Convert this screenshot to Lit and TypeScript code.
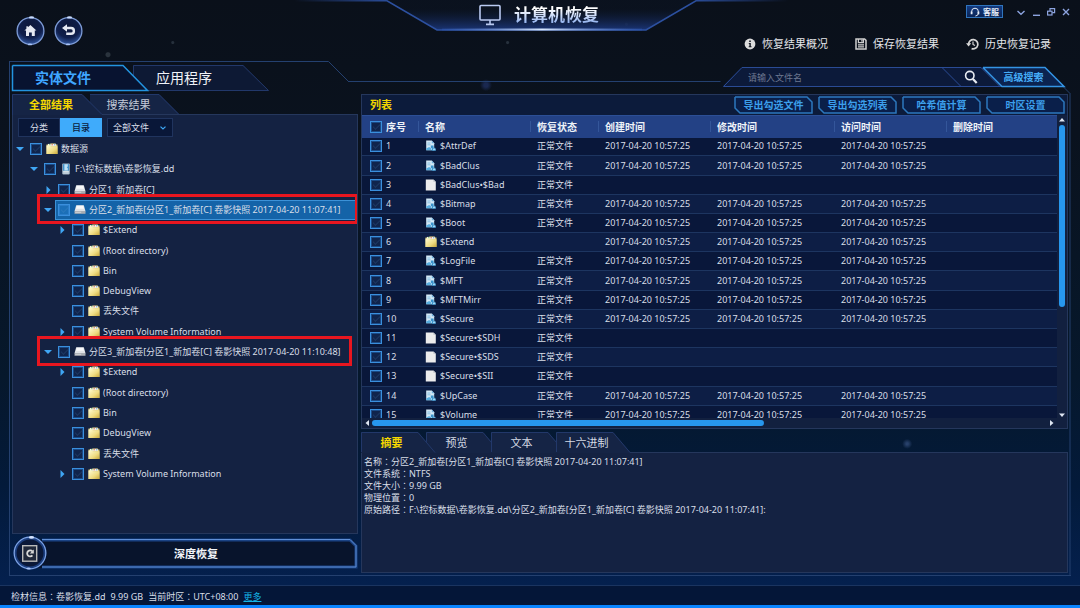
import { LitElement, html, css, svg, nothing } from "lit";
import { customElement, state } from "lit/decorators.js";

type NodeIcon = "folder" | "image" | "disk";
interface TreeRow {
  level: number;
  arrow: "open" | "closed" | "";
  icon: NodeIcon;
  label: string;
  selected?: boolean;
  marked?: boolean;
}
interface FileRow {
  name: string;
  kind: "doc" | "blank" | "folder";
  status: string;
  time: string;
}

const OK = "正常文件";
const TIME = "2017-04-20 10:57:25";

const children = (): TreeRow[] => [
  { level: 3, arrow: "closed", icon: "folder", label: "$Extend" },
  { level: 3, arrow: "", icon: "folder", label: "(Root directory)" },
  { level: 3, arrow: "", icon: "folder", label: "Bin" },
  { level: 3, arrow: "", icon: "folder", label: "DebugView" },
  { level: 3, arrow: "", icon: "folder", label: "丢失文件" },
  { level: 3, arrow: "closed", icon: "folder", label: "System Volume Information" },
];

const TREE: TreeRow[] = [
  { level: 0, arrow: "open", icon: "folder", label: "数据源" },
  { level: 1, arrow: "open", icon: "image", label: "F:\\控标数据\\卷影恢复.dd" },
  { level: 2, arrow: "closed", icon: "disk", label: "分区1_新加卷[C]" },
  { level: 2, arrow: "open", icon: "disk", label: "分区2_新加卷[分区1_新加卷[C] 卷影快照 2017-04-20 11:07:41]", selected: true, marked: true },
  ...children(),
  { level: 2, arrow: "open", icon: "disk", label: "分区3_新加卷[分区1_新加卷[C] 卷影快照 2017-04-20 11:10:48]", marked: true },
  ...children(),
];

const FILES: FileRow[] = [
  { name: "$AttrDef", kind: "doc", status: OK, time: TIME },
  { name: "$BadClus", kind: "doc", status: OK, time: TIME },
  { name: "$BadClus•$Bad", kind: "blank", status: OK, time: "" },
  { name: "$Bitmap", kind: "doc", status: OK, time: TIME },
  { name: "$Boot", kind: "doc", status: OK, time: TIME },
  { name: "$Extend", kind: "folder", status: "", time: TIME },
  { name: "$LogFile", kind: "doc", status: OK, time: TIME },
  { name: "$MFT", kind: "doc", status: OK, time: TIME },
  { name: "$MFTMirr", kind: "doc", status: OK, time: TIME },
  { name: "$Secure", kind: "doc", status: OK, time: TIME },
  { name: "$Secure•$SDH", kind: "blank", status: OK, time: "" },
  { name: "$Secure•$SDS", kind: "blank", status: OK, time: "" },
  { name: "$Secure•$SII", kind: "blank", status: OK, time: "" },
  { name: "$UpCase", kind: "doc", status: OK, time: TIME },
  { name: "$Volume", kind: "doc", status: OK, time: TIME },
];

const DETAILS: [string, string][] = [
  ["名称", "分区2_新加卷[分区1_新加卷[C] 卷影快照 2017-04-20 11:07:41]"],
  ["文件系统", "NTFS"],
  ["文件大小", "9.99 GB"],
  ["物理位置", "0"],
  ["原始路径", "F:\\控标数据\\卷影恢复.dd\\分区2_新加卷[分区1_新加卷[C] 卷影快照 2017-04-20 11:07:41]:"],
];

const colon = html`<span class="colon">：</span>`;

const folderIcon = html`<svg class="ico" viewBox="0 0 12 12" aria-hidden="true">
  <defs><linearGradient id="fg" x1="0" y1="0" x2="1" y2="1"><stop offset="0" stop-color="#fffbd2"/><stop offset=".6" stop-color="#efdc82"/><stop offset="1" stop-color="#c9a93c"/></linearGradient></defs>
  <path d="M.5 1.5h3.2l.8-.9h5l.8 1H11.5v9.4H.5z" fill="#d9c777"/>
  <path d="M2 .9h8v2H2z" fill="#f7f4ea"/><path d="M3 1.3h1.6v1H3z" fill="#7fbf6a"/><path d="M5.4 1.3H7v1H5.4z" fill="#d9785a"/><path d="M8 1.3h1.4v1H8z" fill="#6aa5d8"/>
  <path d="M.5 2.6H4l.8.7h6.7v7.6H.5z" fill="url(#fg)"/></svg>`;
const imageIcon = html`<svg class="ico" viewBox="0 0 12 12" aria-hidden="true">
  <rect x="2.2" y=".6" width="7.6" height="10.8" rx=".8" fill="#9fb4c6"/><rect x="3" y="1.2" width="6" height="6.4" fill="#3f93cf"/>
  <path d="M4.4 1.2h3.4v2.2l-1 .8 1 1v2.4H4.4z" fill="#bfe2f6"/><path d="M3.2 8.6h5.6M3.2 10h5.6" stroke="#e9f0f5" stroke-width=".8"/></svg>`;
const diskIcon = html`<svg class="ico" viewBox="0 0 12 12" aria-hidden="true">
  <path d="M2.2 1.2h7.6l1.7 6H.5z" fill="#dfe2e6"/><path d="M2.8 1.7h6.4l.8 3H2z" fill="#f8f9fa"/>
  <path d="M.5 7h11v2.800H.5z" fill="#a9adb3"/><path d="M1.200 8.300h6" stroke="#e9ebee" stroke-width=".6"/></svg>`;
const docIcon = html`<svg class="ico" viewBox="0 0 12 12" aria-hidden="true">
  <path d="M1.200.5h5.600l2.400 2.700v7H1.200z" fill="#d3e8f6"/><path d="M6.800.5v2.700h2.400z" fill="#6fb0dd"/>
  <path d="M2.400 3h3M2.400 4.800h3.200" stroke="#7fbbe2" stroke-width=".9"/>
  <path d="M1.200 8.600l3-1.600 2 1.600v1.600h-5z" fill="#58aee0"/>
  <path d="M5.800 5.400h2.800v2.400h1.600l.8 3H6.400l.8-2.600H5.800z" fill="#3b93cc"/><path d="M8 8.600h2.400v1.600H8z" fill="#9fd8f6"/></svg>`;
const blankIcon = html`<svg class="ico" viewBox="0 0 12 12" aria-hidden="true">
  <path d="M.8.4h7.600l2.400 2.400v8.800H.8z" fill="#ececec"/><path d="M8.400.4v2.400h2.400z" fill="#bfc3c8"/></svg>`;

const ICONS = { folder: folderIcon, image: imageIcon, disk: diskIcon, doc: docIcon, blank: blankIcon };

const shape = (w: number, h: number, points: string, line: string) => html`<svg class="shape" width=${w} height=${h} viewBox="0 0 ${w} ${h}" aria-hidden="true">
  <polygon class="fill" points=${points} /><polyline class="edge" points=${line} />
</svg>`;

@customElement("app-root")
export class AppRoot extends LitElement {
  @state() private tab = 0;

  static styles = css`
    :host {
      display: block;
      font: 9px/12px "Noto Sans", "Noto Sans CJK SC", sans-serif;
      color: #d9dfe8;
    }
    * { box-sizing: border-box; }
    button, input, select {
      font: inherit; color: inherit; background: none; border: 0; padding: 0; margin: 0;
    }
    button { cursor: pointer; }
    svg { display: block; }
    .colon { font-family: "Noto Sans CJK TC", sans-serif; }
    .app {
      height: 100vh;
      min-height: 560px;
      display: flex;
      flex-direction: column;
      background:
        radial-gradient(circle at 16% 7%, #26303c 0 1px, transparent 2px),
        radial-gradient(circle at 10% 9%, #2a333d 0 2px, transparent 3px),
        radial-gradient(circle at 47% 7%, #27313d 0 1px, transparent 2px),
        radial-gradient(circle at 45% 14%, #1a2850 0 2px, transparent 6px),
        radial-gradient(circle at 58% 4%, #222c38 0 1px, transparent 2px),
        radial-gradient(circle at 84% 73%, #27406a 0 1px, transparent 5px),
        radial-gradient(circle at 93% 98%, #24405e 0 2px, transparent 3px),
        linear-gradient(180deg, #0a101a 0%, #0a121e 22%, #06182c 62%, #031a3a 80%, #04204e 96%);
    }

    .head { position: relative; flex: none; height: 61px; display: flex; justify-content: space-between; padding: 0 16px 0 15px; }
    .banner { position: absolute; left: 50%; top: 0; transform: translateX(-50%); width: 512px; height: 36px; }
    .banner svg.plate { position: absolute; inset: 0; }
    .title { position: relative; display: flex; align-items: center; justify-content: center; gap: 13px; height: 30px; margin: 0; padding-right: 2px; }
    .title span {
      font-size: 17px; line-height: 24px; font-weight: 700;
      background: linear-gradient(#fff 25%, #8fb0ee 85%); -webkit-background-clip: text; background-clip: text; color: transparent;
    }
    .round { display: flex; gap: 8px; padding-top: 15px; }
    .round button { width: 30px; height: 32px; }
    .tools { display: flex; flex-direction: column; align-items: flex-end; gap: 18px; padding-top: 5px; }
    .win { display: flex; align-items: center; gap: 5px; margin-right: -7px; }
    .win button { width: 10px; height: 12px; }
    .win .service {
      width: 37px; height: 13px; display: flex; align-items: center; justify-content: center; gap: 3px; margin-right: 8px;
      font-size: 8px; font-weight: 700; border: 1px solid #2f74bd; background: linear-gradient(#123a80, #0b2557); color: #e6edf8;
    }
    .actions { display: flex; gap: 27px; margin-right: 13px; }
    .actions button { display: flex; align-items: center; gap: 6px; font-size: 11px; line-height: 16px; color: #e4e6ea; }

    .frame { position: relative; flex: 1; display: flex; flex-direction: column; margin: 0 9px; padding: 4px 3px 3px; min-height: 0; }
    .outline { position: absolute; inset: 0; width: 100%; height: 100%; pointer-events: none; overflow: visible; }
    .outline * { stroke: #24406f; fill: none; overflow: visible; }

    .top { position: relative; flex: none; display: flex; justify-content: space-between; align-items: flex-start; height: 29px; }
    .tabs { display: flex; }
    .tabs button { position: relative; display: block; padding: 0; text-align: center; }
    .tabs button span { position: relative; }
    .shape { position: absolute; left: 0; top: 0; overflow: visible; }
    .shape .fill { fill: #152445; }
    .shape .edge { fill: none; stroke: #22386a; }

    .primary button { width: 136px; height: 26px; padding-right: 34px; font-size: 14px; color: #f0f3f8; }
    .primary button + button { margin-left: -15px; }
    .primary .shape .fill { fill: #0d1934; }
    .primary .on .shape .fill { fill: #081330; }
    .primary .on .shape .edge { stroke: #2394e0; stroke-width: 1.5; }
    .primary .on { font-weight: 700; color: #3fa6ff; z-index: 1; }

    .search { position: relative; display: flex; align-items: center; width: 342px; height: 20px; margin: 2px 3px 0 0; }
    .search > .shape .fill { fill: #0c1a3a; }
    .search > .shape .edge { stroke: #2a4b94; }
    .search input { position: relative; width: 196px; margin-left: 25px; height: 18px; outline: 0; }
    .search input::placeholder { color: #6c7890; opacity: 1; }
    .search .go { position: relative; margin-left: 20px; width: 14px; height: 18px; }
    .search .adv { position: absolute; right: 0; top: 0; width: 83px; height: 20px; font-size: 10px; font-weight: 700; color: #46acf8; }
    .search .adv span { position: relative; }
    .adv .shape .fill { fill: #0b2350; }
    .adv .shape .edge { stroke: #3494e4; stroke-width: 1.5; }

    .body { position: relative; flex: 1; display: grid; grid-template-columns: 346px minmax(0, 1fr); grid-template-rows: minmax(0, 1fr); gap: 3px; min-height: 0; }
    .side, .right { display: flex; flex-direction: column; min-height: 0; }
    .sub { position: relative; flex: none; height: 20px; z-index: 1; }
    .sub button { width: 90px; height: 21px; padding-right: 12px; font-size: 11px; line-height: 20px; color: #c4cbd8; }
    .sub button + button { margin-left: -12px; padding-right: 13px; }
    .sub .on { color: #f5d800; z-index: 1; font-weight: 700; }

    .panel { background: #142242; border: 1px solid #25375c; }
    .tree-panel { flex: 1; padding: 3px 1px 0 5px; min-height: 0; overflow: hidden; }
    .filters { display: flex; height: 19px; }
    .filters button { width: 42px; border: 1px solid #20345e; background: #091738; }
    .filters .on { background: #3fabfb; border-color: #3fabfb; color: #0a1c3e; font-weight: 500; }
    .pick { position: relative; width: 66px; margin-left: 5px; border: 1px solid #20345e; background: #091738; }
    .pick select { appearance: none; width: 100%; height: 100%; padding-left: 5px; outline: 0; }
    .pick svg { position: absolute; right: 6px; top: 7px; pointer-events: none; }
    .pick option { background: #091738; }

    .tree { list-style: none; margin: 2px 0 0; padding: 0; display: grid; grid-auto-rows: 1fr; height: 345px; }
    .tree li { position: relative; display: flex; align-items: center; }
    .tree .lv1 { padding-left: 14px; }
    .tree .lv2 { padding-left: 28px; }
    .tree .lv3 { padding-left: 42px; }
    .twist { width: 8px; height: 8px; margin: 0 3px 0 -2px; flex: none; }
    .item { display: flex; align-items: center; flex: 1; height: 100%; padding-left: 2px; border: 1px solid transparent; white-space: nowrap; }
    .item .ico { margin: 0 3px 0 4px; }
    .sel .item { background: #1463a8; border-color: #3c92d8; }
    .mark { position: absolute; left: 19px; top: -6px; right: -2px; bottom: -4px; border: 3px solid #e8161f; z-index: 1; pointer-events: none; }
    .mark.short { right: 4px; }
    .ico { width: 12px; height: 12px; flex: none; }

    .cb {
      appearance: none; width: 12px; height: 12px; flex: none; margin: 0; position: relative;
      border: 1px solid #3a8fdd; background: #10244c; box-shadow: inset 0 0 0 1px #1b4a86;
    }
    .cb::after {
      content: ""; position: absolute; left: 2px; top: 2px; width: 6px; height: 3px;
      border: solid #1d3862; border-width: 0 0 1px 1px; transform: rotate(-45deg);
    }
    .cb:checked::after { border-color: #7cc4ff; }
    .sel .cb { background: #1b6fb8; box-shadow: inset 0 0 0 1px #2a7cc8; }
    .sel .cb::after { border-color: #2a78bc; }

    .deep { position: relative; flex: none; height: 34px; margin: 3px 0 2px; display: block; width: 100%; padding: 0 0 0 22px; font-size: 11px; font-weight: 700; color: #f3f6fa; }
    .deep .bar { position: absolute; inset: 0; width: 100%; height: 100%; overflow: visible; }
    .deep .bar svg { overflow: visible; }
    .deep .badge { position: absolute; left: 1px; top: -1px; }
    .deep span { position: relative; }

    .list { flex: 1; display: flex; flex-direction: column; min-height: 0; background: #0c1b3b; }
    .bar-top { display: flex; flex: none; align-items: center; justify-content: space-between; height: 20px; padding: 0 2px 0 8px; }
    .caption { margin: 0; font-size: 11px; line-height: 20px; font-weight: 700; color: #f0d400; }
    .cmds { display: flex; gap: 5px; }
    .cmds button { position: relative; width: 79px; height: 18px; font-size: 10px; font-weight: 700; color: #3c9fec; }
    .cmds button span { position: relative; }
    .cmds .fill { fill: #0a1f4a; }
    .cmds .edge { stroke: #2c78be; stroke-width: 1.5; }
    .grid { flex: 1; display: grid; grid-template-columns: minmax(0, 1fr) 10px; grid-template-rows: minmax(0, 1fr) 10px; min-height: 0; background: #12203f; }
    .clip { overflow: hidden; }
    table { width: 100%; height: 310px; border-collapse: collapse; table-layout: fixed; }
    thead { height: 22px; }
    th, td { padding: 0 0 0 7px; text-align: left; white-space: nowrap; }
    th { height: 22px; background: #234185; border-top: 1px solid #2c4f96; font-size: 10px; font-weight: 700; color: #eef2f8; }
    th + th { background-image: linear-gradient(#34569a, #34569a); background-size: 1px 11px; background-repeat: no-repeat; background-position: 0 5px; }
    td { border-bottom: 1px solid #1d3560; background: #09173a; }
    tr:nth-child(even) td { background: #0d1e45; }
    .cell { display: flex; align-items: center; gap: 4px; }
    .cell .ico { margin-right: -1px; }
    .num { padding-left: 8px; }
    .c0 { width: 56px; } .c1 { width: 112px; } .c2 { width: 68px; } .c3 { width: 112px; } .c4 { width: 124px; } .c5 { width: 112px; }
    .vbar { display: flex; flex-direction: column; align-items: center; padding: 3px 0 1px; }
    .vtrack { flex: 1; width: 6px; margin: 3px 0; }
    .vthumb { height: 64%; border-radius: 3px; background: #2797ee; }
    .hbar { display: flex; align-items: center; padding: 0 3px; }
    .htrack { flex: 1; height: 6px; margin: 0 3px; }
    .hthumb { width: 58%; height: 100%; border-radius: 3px; background: #2797ee; }

    .lower { position: relative; flex: none; height: 20px; margin-top: 3px; z-index: 1; }
    .lower button { width: 74px; height: 21px; padding-right: 13px; font-size: 11px; line-height: 20px; color: #d3d9e4; }
    .lower button + button { margin-left: -9px; }
    .lower .on { color: #f5d800; z-index: 1; font-weight: 700; }
    .info { flex: none; height: 121px; margin: 0; padding: 3px 2px; }
    .info div { display: flex; white-space: nowrap; }
    .info dt, .info dd { margin: 0; }

    .foot { flex: none; display: flex; align-items: center; gap: 5px; height: 32px; padding: 12px 11px 0; border-bottom: 3px solid #0a84ff;
      background: linear-gradient(#1a3460, #1a3460) 0 9px / 100% 1px no-repeat, linear-gradient(#041638, #041638) 0 9px / 100% 100% no-repeat; }
    .foot a { color: #14b4e6; }
  `;

  private check(label: string) {
    return html`<input class="cb" type="checkbox" aria-label=${label} />`;
  }

  private outline() {
    return html`<svg class="outline" aria-hidden="true">
      <path d="M.5 0V20M0 .5H319.5L339.5 20.5" />
      <line x1=".5" y1="20" x2=".5" y2="100%" />
      <line x1="339" y1="20.5" x2="67%" y2="20.5" />
      <svg x="100%" y="0"><path d="M-8 25.5L-1.5 32" /></svg>
      <svg x="100%" y="0" width="1" height="100%"><line x1="-1" y1="32" x2="-1" y2="100%" /></svg>
      <svg x="0" y="100%" width="100%" height="1"><line x1="0" y1="-.5" x2="100%" y2="-.5" /></svg>
    </svg>`;
  }

  private header() {
    const ring = (id: string, glyph: unknown) => html`<svg width="30" height="32" viewBox="0 0 30 32" aria-hidden="true">
      <defs><radialGradient id=${id} cx=".5" cy=".3" r=".75"><stop offset="0" stop-color="#0c1638"/><stop offset=".6" stop-color="#101f4c"/><stop offset="1" stop-color="#3862b0"/></radialGradient></defs>
      <circle cx="15.5" cy="16" r="13.4" fill="url(#${id})" stroke="#7d9bd6" stroke-width="1.3" />
      <ellipse cx="16.5" cy="2.4" rx="2.6" ry="1.2" fill="#c9dcff" /><ellipse cx="15" cy="29.4" rx="2.2" ry=".9" fill="#a9c4f6" />${glyph}</svg>`;
    return html`<header class="head">
      <div class="banner">
        <svg class="plate" width="512" height="36" viewBox="0 0 512 36" aria-hidden="true">
          <defs>
            <linearGradient id="pl" x1="0" y1="0" x2="0" y2="1"><stop offset=".3" stop-color="#0b1424" stop-opacity=".4"/><stop offset="1" stop-color="#1a3475"/></linearGradient>
            <linearGradient id="ln" x1="0" x2="1"><stop offset="0" stop-color="#2a4da0" stop-opacity="0"/><stop offset=".2" stop-color="#2c50a0"/><stop offset=".8" stop-color="#2c50a0"/><stop offset="1" stop-color="#2a4da0" stop-opacity="0"/></linearGradient>
            <linearGradient id="gl" x1="0" x2="1"><stop offset="0" stop-color="#2f5cc0" stop-opacity=".3"/><stop offset=".5" stop-color="#d8e8ff"/><stop offset="1" stop-color="#2f5cc0" stop-opacity=".3"/></linearGradient>
          </defs>
          <path d="M103 0L153 30H362L412 0z" fill="url(#pl)" />
          <path d="M10 .8H103L153 30H362L412 .8H504" fill="none" stroke="url(#ln)" stroke-width="1.6" />
          <rect x="158" y="28.5" width="200" height="2" fill="url(#gl)" />
        </svg>
        <h1 class="title">
          <svg width="22" height="22" viewBox="0 0 22 22" fill="none" stroke="#b9c9f0" stroke-width="1.6" aria-hidden="true"><rect x="1" y="1.5" width="20" height="14.5" rx="1" /><path d="M11 16v4M7 20.4h8" /></svg>
          <span>计算机恢复</span>
        </h1>
      </div>
      <nav class="round" aria-label="导航">
        <button aria-label="主页">${ring("r1", svg`<path d="M15.4 10l6 5.6h-1.6V21h-3v-3.6h-2.8V21h-3v-5.4H9.4l2-1.9v-2.5h1.5v1.1z" fill="#e6e9f2" />`)}</button>
        <button aria-label="返回">${ring("r2", svg`<path d="M14 9.200v2.600h4a4.100 4.100 0 0 1 0 8.200h-4.800v-2.400H18a1.700 1.700 0 0 0 0-3.400h-4v2.600L9 13z" fill="#e6e9f2" />`)}</button>
      </nav>
      <div class="tools">
        <div class="win">
          <button class="service"><svg width="10" height="10" viewBox="0 0 10 10" fill="none" stroke="#e6edf8" aria-hidden="true"><path d="M1.6 6V4.6a3.4 3.4 0 0 1 6.8 0V6M8.4 6.6Q8 8.8 5.4 9" /><path d="M1.6 4.4v2.8M8.4 4.4v2.8" stroke-width="1.8" /></svg>客服</button>
          <button aria-label="菜单"><svg width="10" height="12" viewBox="0 0 10 12" fill="none" stroke="#8da4e0" stroke-width="1.4"><path d="M1.5 5L5 8.2 8.5 5" /></svg></button>
          <button aria-label="最小化"><svg width="10" height="12" viewBox="0 0 10 12" stroke="#8da4e0" stroke-width="1.4"><path d="M2 9.3h7" /></svg></button>
          <button aria-label="还原"><svg width="10" height="12" viewBox="0 0 10 12" fill="none" stroke="#8da4e0" stroke-width="1.2"><path d="M4 5V2.6h4.6v4H6.2" /><rect x="1.6" y="5.2" width="4.4" height="3.8" /></svg></button>
          <button aria-label="关闭"><svg width="10" height="12" viewBox="0 0 10 12" stroke="#8da4e0" stroke-width="1.4"><path d="M2 3l6 6M8 3L2 9" /></svg></button>
        </div>
        <div class="actions">
          <button><svg width="12" height="12" viewBox="0 0 12 12" aria-hidden="true"><circle cx="6" cy="6" r="5.4" fill="#dcdcdc" /><path d="M4.8 4.9h2v3.4h.7v1H4.7v-1h.7V5.9h-.6zM5.2 2.4h1.6v1.5H5.2z" fill="#10151e" /></svg>恢复结果概况</button>
          <button><svg width="12" height="12" viewBox="0 0 12 12" fill="none" stroke="#cfcfcf" stroke-width="1.5" aria-hidden="true"><path d="M1 1h8.6L11 2.4V11H1z" /><path d="M3.4 1v3.6h5V1M6.9 1.8v2M3 6.8h6M3 8.8h6" stroke-width="1.2" /></svg>保存恢复结果</button>
          <button><svg width="13" height="12" viewBox="0 0 13 12" fill="none" stroke="#d6d6d6" stroke-width="1.7" aria-hidden="true"><path d="M2.6 6.4A4.6 4.6 0 1 1 5.6 10.6" /><path d="M0 5.2h5.2L2.6 8.400z" fill="#d6d6d6" stroke="none" /><path d="M7 3.4v3l2 1.2" stroke-width="1.2" /></svg>历史恢复记录</button>
        </div>
      </div>
    </header>`;
  }

  private side() {
    return html`<section class="side">
      <div class="tabs sub">
        <button class="on">${shape(90, 21, "0,0 70,0 90,20 90,21 0,21", "0.5,21 0.5,0.5 70,0.5 90,20.5")}<span>全部结果</span></button>
        <button>${shape(90, 21, "0,0 69,0 89,20 0,20", "0,0.5 69,0.5 89,20.5")}<span>搜索结果</span></button>
      </div>
      <div class="panel tree-panel">
        <div class="filters">
          <button>分类</button><button class="on">目录</button>
          <label class="pick"><select aria-label="文件类型"><option>全部文件</option></select>
            <svg width="6" height="4" viewBox="0 0 6 4" fill="none" stroke="#3fa6f4" stroke-width="1.2"><path d="M.5.6L3 3 5.5.6" /></svg></label>
        </div>
        <ul class="tree">
          ${TREE.map((r) => html`<li class="lv${r.level} ${r.selected ? "sel" : ""}">
            <svg class="twist" viewBox="0 0 8 8" fill="#3fa6f4" aria-hidden="true">
              ${r.arrow === "open" ? svg`<path d="M0 2h8L4 6z" />` : r.arrow === "closed" ? svg`<path d="M2.5 0v8L6.500 4z" />` : nothing}
            </svg>
            <label class="item">${this.check(r.label)}${ICONS[r.icon]}<span>${r.label}</span></label>
            ${r.marked ? html`<i class="mark ${r.selected ? "" : "short"}"></i>` : nothing}
          </li>`)}
        </ul>
      </div>
      <button class="deep">
        <svg class="bar" aria-hidden="true">
          <rect x="20" y="3" width="93%" height="28" fill="#08142c" />
          <svg x="100%"><path d="M-316 3H-8L-2 9V30H-316" fill="#08142c" stroke="#1b4384" stroke-width="3" /><path d="M-316 2.500H-8L-2 8.500V30H-316" fill="none" stroke="#5f8fd6" stroke-width="1" /></svg>
        </svg>
        <svg class="badge" width="34" height="34" viewBox="0 0 34 34" aria-hidden="true">
          <circle cx="17" cy="17" r="15" fill="#0a1838" stroke="#1c3f80" stroke-width="3" /><circle cx="17" cy="17" r="15.800" fill="none" stroke="#7fa4e4" stroke-width="1.2" />
          <ellipse cx="18.500" cy="1.400" rx="2.600" ry="1.300" fill="#d5e4ff" /><ellipse cx="15.500" cy="32.600" rx="2.200" ry="1" fill="#a9c4f6" />
          <rect x="9.700" y="9.700" width="14" height="15.500" fill="#20283a" stroke="#b9b9b9" stroke-width="1.4" />
          <path d="M19.400 19.400a3 3 0 1 1 0-4" fill="none" stroke="#d8d8d8" stroke-width="1.800" /><path d="M20.800 13.400v4h-4z" fill="#d8d8d8" />
        </svg>
        <span>深度恢复</span>
      </button>
    </section>`;
  }

  private list() {
    const cmd = (t: string) => html`<button>${shape(79, 18, "1,1 73,1 78,6 78,17 6,17 1,12", "1,1 73,1 78,6 78,17 6,17 1,12 1,1")}<span>${t}</span></button>`;
    return html`<div class="panel list">
      <div class="bar-top">
        <h2 class="caption">列表</h2>
        <div class="cmds">${["导出勾选文件", "导出勾选列表", "哈希值计算", "时区设置"].map(cmd)}</div>
      </div>
      <div class="grid">
        <div class="clip">
          <table>
            <thead><tr>
              <th class="c0 num"><div class="cell">${this.check("全选")}序号</div></th>
              <th class="c1">名称</th><th class="c2">恢复状态</th><th class="c3">创建时间</th>
              <th class="c4">修改时间</th><th class="c5">访问时间</th><th>删除时间</th>
            </tr></thead>
            <tbody>
              ${FILES.map((f, i) => html`<tr>
                <td class="num"><div class="cell">${this.check(f.name)}${i + 1}</div></td>
                <td><div class="cell">${ICONS[f.kind]}${f.name}</div></td>
                <td>${f.status}</td><td>${f.time}</td><td>${f.time}</td><td>${f.time}</td><td></td>
              </tr>`)}
            </tbody>
          </table>
        </div>
        <div class="vbar">
          <svg width="6" height="4" viewBox="0 0 6 4" fill="#dfe6f2"><path d="M3 0l3 3.500H0z" /></svg>
          <div class="vtrack"><div class="vthumb"></div></div>
          <svg width="6" height="4" viewBox="0 0 6 4" fill="#dfe6f2"><path d="M0 .5h6L3 4z" /></svg>
        </div>
        <div class="hbar">
          <svg width="4" height="6" viewBox="0 0 4 6" fill="#dfe6f2"><path d="M4 0v6L.5 3z" /></svg>
          <div class="htrack"><div class="hthumb"></div></div>
          <svg width="4" height="6" viewBox="0 0 4 6" fill="#dfe6f2"><path d="M0 0v6l3.500-3z" /></svg>
        </div>
      </div>
    </div>`;
  }

  render() {
    return html`<div class="app">
      ${this.header()}
      <main class="frame">
        ${this.outline()}
        <div class="top">
          <div class="tabs primary">
            <button class="on">${shape(136, 26, "0,0 111,0 136,26 0,26", "0.5,0.5 111,0.5 135.5,25.5 0.5,25.5 0.5,0.5")}<span>实体文件</span></button>
            <button>${shape(136, 26, "0,0 110,0 136,26 0,26", "0.5,0.5 110,0.5 135.5,25.5 0.5,25.5 0.5,0.5")}<span>应用程序</span></button>
          </div>
          <form class="search" @submit=${(e: Event) => e.preventDefault()}>
            ${shape(342, 20, "0,19 19,0 260,0 279,19", "279,19.5 0.5,19.5 19,0.5 258,0.5 277,19.5 238,19.5 219,0.5")}
            <input type="text" placeholder="请输入文件名" aria-label="文件名" />
            <button class="go" aria-label="搜索"><svg width="14" height="18" viewBox="0 0 14 18" fill="none" stroke="#e8ecf2" aria-hidden="true"><circle cx="5.800" cy="7.600" r="4.200" stroke-width="1.600" /><path d="M8.900 10.900l3.800 4" stroke-width="2.200" /></svg></button>
            <button class="adv" type="button">${shape(83, 20, "1,0 63,0 82,19 20,19", "1,0.5 63,0.5 82,19.5 20,19.5 1,0.5")}<span>高级搜索</span></button>
          </form>
        </div>
        <div class="body">
          ${this.side()}
          <section class="right">
            ${this.list()}
            <div class="tabs lower">
              ${["摘要", "预览", "文本", "十六进制"].map((t, i) => html`<button class=${this.tab === i ? "on" : ""} @click=${() => (this.tab = i)}>
                ${shape(74, 21, "0,0 57,0 74,20 74,21 0,21", "0.5,20 0.5,0.5 57,0.5 74,20.5")}<span>${t}</span></button>`)}
            </div>
            <dl class="panel info">
              ${DETAILS.map(([k, v]) => html`<div><dt>${k}${colon}</dt><dd>${v}</dd></div>`)}
            </dl>
          </section>
        </div>
      </main>
      <footer class="foot">
        <span>检材信息${colon}卷影恢复.dd</span><span>9.99 GB</span><span>当前时区${colon}UTC+08:00</span><a href="#more">更多</a>
      </footer>
    </div>`;
  }
}
